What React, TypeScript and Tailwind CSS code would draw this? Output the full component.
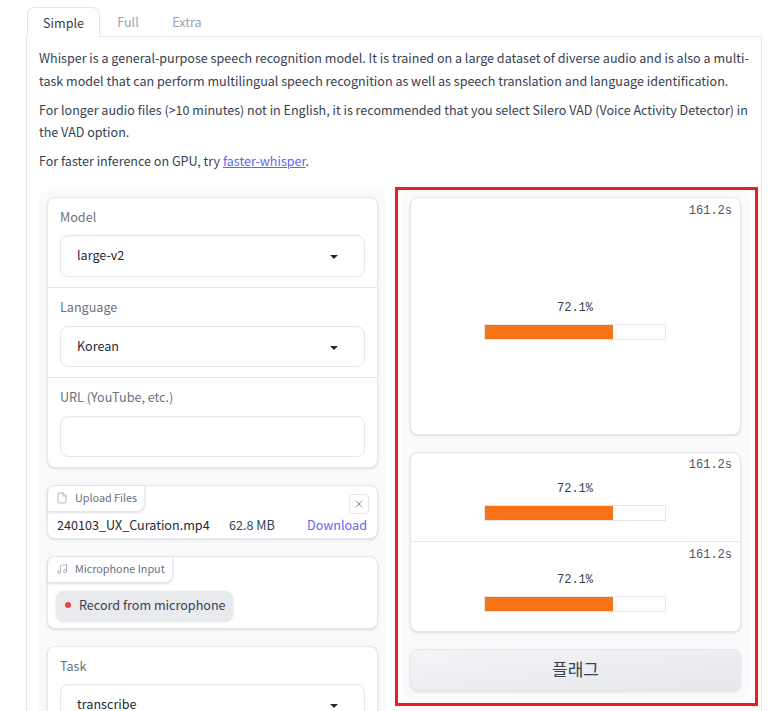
import React from "react";
import { File, Music, X } from "lucide-react";

const sans = "font-['Noto_Sans_CJK_KR',sans-serif]";
const mono = "font-['Liberation_Mono',monospace]";

function Caret() {
  return (
    <svg width="8" height="4" viewBox="0 0 8 4" className="absolute right-[26px] top-[19px]">
      <path d="M0 0h8L4 4z" fill="#1f2937" />
    </svg>
  );
}

function SelectRow({ label, value, bottom, tight }: { label: string; value: string; bottom?: boolean; tight?: boolean }) {
  return (
    <div className={`px-3 py-[10px] ${bottom ? "border-b border-[#e5e7eb]" : ""}`}>
      <div className={`text-[12.6px] leading-[17px] text-[#6b7280] ${tight ? "mb-[11px]" : "mb-[10px]"}`}>{label}</div>
      <div className={`relative rounded-lg border border-[#e5e7eb] bg-white pl-4 text-[12.6px] text-[#1f2937] shadow-[inset_0_1px_2px_rgba(0,0,0,0.03)] ${tight ? "h-[41px] leading-[37px]" : "h-[42px] leading-[38px]"}`}>
        {value}
        <Caret />
      </div>
    </div>
  );
}

function Bar() {
  return (
    <div className="flex flex-col items-center pr-px pt-px">
      <div className={`text-xs leading-[14px] text-[#374151] ${mono}`}>72.1%</div>
      <div className="mt-[9px] h-4 w-[182px] border border-[#e5e7eb] bg-white">
        <div className="h-full w-[128px] bg-[#f97316]" />
      </div>
    </div>
  );
}

function Timer({ top }: { top: string }) {
  return <div className={`absolute right-[8px] text-xs leading-[14px] text-[#4b5563] ${top} ${mono}`}>161.2s</div>;
}

export default function App() {
  return (
    <div className={`relative h-[711px] w-[775px] overflow-hidden bg-white ${sans}`}>
      <div className="ml-[26px] mr-[13px] pt-[7px]">
        <div className="flex h-[30px] border-b border-[#e5e7eb] text-[12.6px]">
          <div className="ml-px h-[30px] w-[73px] rounded-t-lg border border-b-0 border-[#e5e7eb] bg-white text-center leading-[29px] text-[#374151]">
            Simple
          </div>
          <div className="w-[56px] text-center leading-[29px] text-[#9ca3af]">Full</div>
          <div className="w-[62px] text-center leading-[29px] text-[#9ca3af]">Extra</div>
        </div>
        <div className="border-x border-[#e5e7eb] px-3 pt-[10px]">
          <div className="text-[12.55px] leading-[22.5px] text-[#374151]">
            <p className="mb-[6.5px]">
              Whisper is a general-purpose speech recognition model. It is trained on a large dataset of diverse audio and is also a multi-task model that can perform multilingual speech recognition as well as speech translation and language identification.
            </p>
            <p className="mb-[6.5px]">
              For longer audio files (&gt;10 minutes) not in English, it is recommended that you select Silero VAD (Voice Activity Detector) in the VAD option.
            </p>
            <p>
              For faster inference on GPU, try <a className="text-[#6366f1] underline">faster-whisper</a>.
            </p>
          </div>
          <div className="mt-[16.5px] grid grid-cols-2 gap-4">
            <div className="flex flex-col gap-[17px] rounded-xl bg-[#f9fafb] p-2">
              <div className="rounded-lg border border-[#e5e7eb] bg-white shadow-sm">
                <SelectRow label="Model" value="large-v2" bottom />
                <SelectRow label="Language" value="Korean" bottom tight />
                <div className="px-3 py-[10px]">
                  <div className="mb-[11px] text-[12.6px] leading-[17px] text-[#6b7280]">URL (YouTube, etc.)</div>
                  <div className="h-[41px] rounded-lg border border-[#e5e7eb] bg-white shadow-[inset_0_1px_2px_rgba(0,0,0,0.03)]" />
                </div>
              </div>
              <div className="relative h-[54px] rounded-lg border border-[#e5e7eb] bg-white shadow-sm">
                <div className="flex h-[26px] w-[97px] items-center gap-[7px] rounded-br-lg border-r border-b border-[#e5e7eb] pb-[2px] pl-2 text-[10.8px] text-[#6b7280] shadow-sm">
                  <File size={12} strokeWidth={1.5} className="text-[#9ca3af]" />
                  Upload Files
                </div>
                <button className="absolute right-[8px] top-[8px] flex h-[20px] w-[20px] items-center justify-center rounded border border-[#e5e7eb] bg-white text-[#6b7280]">
                  <X size={12} strokeWidth={1.5} />
                </button>
                <div className="flex items-center pl-[9px] text-[12.6px] leading-[25px]">
                  <span className="w-[172px] text-[#1f2937]">240103_UX_Curation.mp4</span>
                  <span className="w-[78px] text-[#374151]">62.8 MB</span>
                  <span className="text-[#6366f1]">Download</span>
                </div>
              </div>
              <div className="h-[73px] rounded-lg border border-[#e5e7eb] bg-white shadow-sm">
                <div className="flex h-[26px] w-[125px] items-center gap-[7px] rounded-br-lg border-r border-b border-[#e5e7eb] pb-[2px] pl-2 text-[10.8px] text-[#6b7280] shadow-sm">
                  <Music size={12} strokeWidth={1.5} className="text-[#9ca3af]" />
                  Microphone Input
                </div>
                <div className="ml-2 mt-[8px] flex h-[30px] w-[177px] items-center gap-2 rounded-lg bg-[#e9eaee] pb-[2px] pl-[9px] text-[12.6px] text-[#374151] shadow-sm">
                  <span className="h-[6px] w-[6px] rounded-full bg-[#ef4444]" />
                  Record from microphone
                </div>
              </div>
              <div className="rounded-lg border border-[#e5e7eb] bg-white shadow-sm">
                <SelectRow label="Task" value="transcribe" />
              </div>
            </div>
            <div className="flex h-[510px] flex-col rounded-xl bg-[#f9fafb] p-2">
              <div className="relative h-[238px] shrink-0 rounded-lg border border-[#e5e7eb] bg-white pt-[102px] shadow-sm">
                <Timer top="top-[6px]" />
                <Bar />
              </div>
              <div className="mt-[17px] h-[180px] shrink-0 rounded-lg border border-[#e5e7eb] bg-white shadow-sm">
                <div className="relative h-[89px] border-b border-[#e5e7eb] pt-[28px]">
                  <Timer top="top-[5px]" />
                  <Bar />
                </div>
                <div className="relative h-[89px] pt-[30px]">
                  <Timer top="top-[6px]" />
                  <Bar />
                </div>
              </div>
              <button className="mt-[17px] h-[42px] shrink-0 rounded-lg border border-[#e5e7eb] bg-gradient-to-br from-[#f3f4f6] to-[#e5e7eb] pb-[2px] text-[17px] text-[#374151] shadow-sm">
                플래그
              </button>
            </div>
          </div>
        </div>
      </div>
      {/* red highlight box drawn over the output column */}
      <div className="absolute left-[395px] top-[187px] h-[519px] w-[363px] border-[3px] border-[#ed1c24]" />
    </div>
  );
}
